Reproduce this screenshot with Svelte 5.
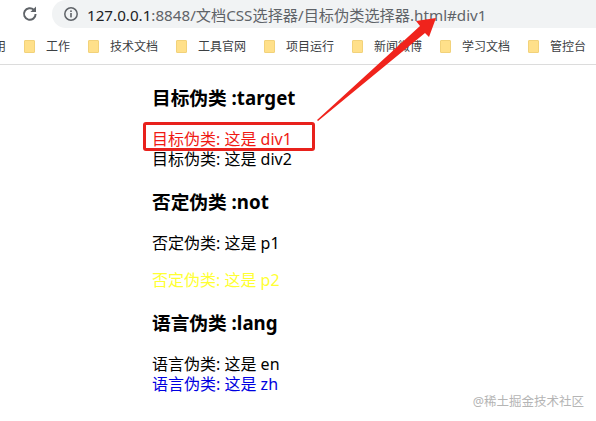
<script>
  const bookmarks = ["工作", "技术文档", "工具官网", "项目运行", "新闻微博", "学习文档", "管控台"];
</script>

<div class="page">
  <div class="toolbar">
    <svg class="reload" width="18" height="18" viewBox="0 0 18 18">
      <path d="M14.600 9a5.800 5.800 0 1 1-1.700-4.100" fill="none" stroke="#5f6368" stroke-width="2" />
      <path d="M15 1.500v5.600H9.400z" fill="#5f6368" />
    </svg>
    <div class="address">
      <svg width="16" height="16" viewBox="0 0 16 16">
        <circle cx="8" cy="8" r="6.200" fill="none" stroke="#5f6368" stroke-width="1.500" />
        <rect x="7.200" y="7" width="1.600" height="4.400" fill="#5f6368" />
        <rect x="7.200" y="4.400" width="1.600" height="1.600" fill="#5f6368" />
      </svg>
      <span class="url"><span class="host">127.0.0.1</span>:8848/文档CSS选择器/目标伪类选择器.html#div1</span>
    </div>
  </div>

  <div class="bookmarks">
    <span class="cut">用</span>
    {#each bookmarks as name}
      <div class="bookmark">
        <span class="folder"></span>
        <span>{name}</span>
      </div>
    {/each}
  </div>

  <main>
    <h3>目标伪类 :target</h3>
    <div class="red">目标伪类: 这是 div1</div>
    <div>目标伪类: 这是 div2</div>
    <h3>否定伪类 :not</h3>
    <p>否定伪类: 这是 p1</p>
    <p class="yellow">否定伪类: 这是 p2</p>
    <h3>语言伪类 :lang</h3>
    <div>语言伪类: 这是 en</div>
    <div class="blue">语言伪类: 这是 zh</div>
  </main>

  <div class="mark-box"></div>
  <svg class="arrow" width="596" height="421" viewBox="0 0 596 421">
    <path d="M317 120 L420 26 L416 21 L436 18 L429 37 L425 33 L318 121 Z" fill="#f0231c" />
  </svg>
  <div class="watermark">@稀土掘金技术社区</div>
</div>

<style>
  :global(body) {
    margin: 0;
    background: #fff;
  }

  .page {
    position: relative;
    width: 596px;
    height: 421px;
    overflow: hidden;
    font-family: "Noto Sans", "Noto Sans CJK SC", sans-serif;
    color: #000;
  }

  .toolbar {
    display: flex;
    align-items: center;
    height: 28px;
    padding-left: 21px;
  }

  .reload {
    margin-right: 13px;
  }

  .address {
    flex: 1;
    display: flex;
    align-items: center;
    gap: 8px;
    height: 28px;
    padding-left: 11px;
    background: #f1f3f4;
    border-radius: 14px 0 0 14px;
    margin-top: -1px;
  }

  .url {
    font-size: 15.200px;
    color: #5f6368;
    white-space: nowrap;
  }

  .host {
    color: #202124;
  }

  .bookmarks {
    display: flex;
    align-items: center;
    gap: 18px;
    height: 36px;
    margin-left: -6px;
    border-bottom: 1px solid #dcdcdc;
    font-size: 12px;
    color: #3c4043;
    white-space: nowrap;
  }

  .bookmark {
    display: flex;
    align-items: center;
    gap: 11px;
  }

  .folder {
    box-sizing: border-box;
    width: 11px;
    height: 13px;
    background: #ffe08a;
    border: 1px solid #f2d27a;
    border-radius: 1px;
  }

  main {
    padding-left: 152px;
    font-size: 16px;
    line-height: 20px;
  }

  h3 {
    margin: 22px 0 21px;
    font-size: 18.700px;
    line-height: 21px;
    font-weight: 700;
  }

  p {
    margin: 17px 0;
  }

  .red { color: #f01a14; }
  .yellow { color: #ffff33; }
  .blue { color: #0000e0; }

  .mark-box {
    position: absolute;
    left: 143px;
    top: 122px;
    width: 166px;
    height: 23px;
    border: 3px solid #e8211c;
    border-radius: 3px;
  }

  .arrow {
    position: absolute;
    left: 0;
    top: 0;
  }

  .watermark {
    position: absolute;
    right: 12px;
    bottom: 11px;
    font-size: 12.500px;
    color: #b5b5b5;
  }
</style>
